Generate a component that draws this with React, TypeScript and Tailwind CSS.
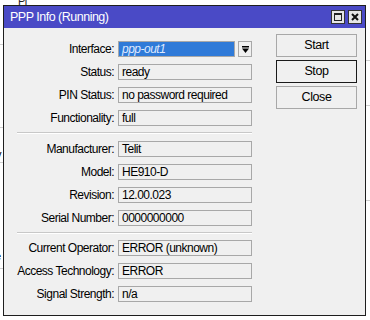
import React from 'react'

const font = { fontFamily: '"Liberation Sans", Arial, sans-serif' }

function Field({ label, value }: { label: string; value: string }) {
  return (
    <div className="flex items-center h-[16px]">
      <div className="w-[110px] text-right whitespace-nowrap">{label}</div>
      <div className="ml-[4px] w-[134px] h-[16px] border border-[#a8a8a8] bg-[#f0f0f0] pl-[3px] leading-[14px] whitespace-nowrap overflow-hidden">
        {value}
      </div>
    </div>
  )
}

function Separator() {
  return (
    <div className="ml-[13px] w-[235px] border-t border-[#c8c8c8] border-b-white border-b" />
  )
}

function DropIcon() {
  return (
    <svg width="9" height="9" viewBox="0 0 9 9">
      <rect x="1" y="1" width="7" height="1.5" fill="#000" />
      <polygon points="1,3.5 8,3.5 4.5,8" fill="#000" />
    </svg>
  )
}

export default function App() {
  return (
    <div className="relative w-[370px] h-[320px] bg-white overflow-hidden text-[12px] tracking-[-0.5px] text-black" style={font}>
      {/* stuff behind the window */}
      <div className="absolute left-[18px] top-[-7px] text-[11px] text-[#222]">Pl</div>
      <div className="absolute left-0 top-[44px] w-[4px] border-t border-[#d0d0d0]" />
      <div className="absolute left-[-4px] top-[100px] text-[11px]">t</div>
      <div className="absolute left-0 top-[127px] w-[4px] border-t border-[#d0d0d0]" />
      <div className="absolute left-[-4px] top-[146px] text-[11px]">v</div>
      <div className="absolute left-0 top-[162px] w-[4px] border-t border-[#d0d0d0]" />
      <div className="absolute left-[-5px] top-[248px] text-[11px]">e</div>
      <div className="absolute left-0 top-[268px] w-[4px] border-t border-[#d0d0d0]" />
      <div className="absolute left-[366px] top-[60px] w-[4px] border-t border-[#d0d0d0]" />
      <div className="absolute left-[366px] top-[105px] w-[4px] border-t border-[#d0d0d0]" />
      <div className="absolute left-[366px] top-[200px] w-[4px] border-t border-[#d0d0d0]" />

      {/* window */}
      <div className="absolute left-[3px] top-[5px] w-[363px] h-[311px] border border-[#1e1e1e] bg-[#f0f0f0] flex flex-col">
        <div className="h-[22px] bg-[#4a4ac6] flex items-center pl-[6px] pr-[3px]">
          <div className="text-white text-[12.5px] tracking-[-0.5px] flex-1">PPP Info (Running)</div>
          <div className="flex gap-[3px]">
            <div className="w-[14px] h-[14px] bg-[#e6e6e6] border border-[#333] flex items-center justify-center">
              <div className="w-[8px] h-[8px] border border-[#222] border-t-2" />
            </div>
            <div className="w-[14px] h-[14px] bg-[#e6e6e6] border border-[#333] flex items-center justify-center">
              <svg width="8" height="8" viewBox="0 0 8 8">
                <path d="M1 1 L7 7 M7 1 L1 7" stroke="#111" strokeWidth="2" />
              </svg>
            </div>
          </div>
        </div>

        <div className="flex flex-1">
          <div className="flex flex-col w-[272px] pt-[13px]">
            <div className="flex flex-col gap-[7px]">
              <div className="flex items-center h-[16px]">
                <div className="w-[110px] text-right">Interface:</div>
                <div className="ml-[4px] w-[117px] h-[16px] border border-[#a8a8a8] bg-[#2f7ad8] pl-[3px] leading-[14px] italic text-[#dfe9ff]">
                  ppp-out1
                </div>
                <div className="ml-[3px] w-[14px] h-[16px] border border-[#a8a8a8] bg-[#f0f0f0] flex items-center justify-center">
                  <DropIcon />
                </div>
              </div>
              <Field label="Status:" value="ready" />
              <Field label="PIN Status:" value="no password required" />
              <Field label="Functionality:" value="full" />
            </div>
            <div className="mt-[6px] mb-[7px]">
              <Separator />
            </div>
            <div className="flex flex-col gap-[7px]">
              <Field label="Manufacturer:" value="Telit" />
              <Field label="Model:" value="HE910-D" />
              <Field label="Revision:" value="12.00.023" />
              <Field label="Serial Number:" value="0000000000" />
            </div>
            <div className="mt-[6px] mb-[6px]">
              <Separator />
            </div>
            <div className="flex flex-col gap-[7px]">
              <Field label="Current Operator:" value="ERROR (unknown)" />
              <Field label="Access Technology:" value="ERROR" />
              <Field label="Signal Strength:" value="n/a" />
            </div>
          </div>

          <div className="flex flex-col gap-[3px] pt-[6px]">
            <button className="w-[81px] h-[23px] border border-[#a8a8a8] bg-[#f0f0f0] text-[12.5px] tracking-[-0.4px]">Start</button>
            <button className="w-[81px] h-[23px] border border-[#1a1a1a] bg-[#f0f0f0] text-[12.5px] tracking-[-0.4px]">Stop</button>
            <button className="w-[81px] h-[23px] border border-[#a8a8a8] bg-[#f0f0f0] text-[12.5px] tracking-[-0.4px]">Close</button>
          </div>
        </div>
      </div>
    </div>
  )
}
